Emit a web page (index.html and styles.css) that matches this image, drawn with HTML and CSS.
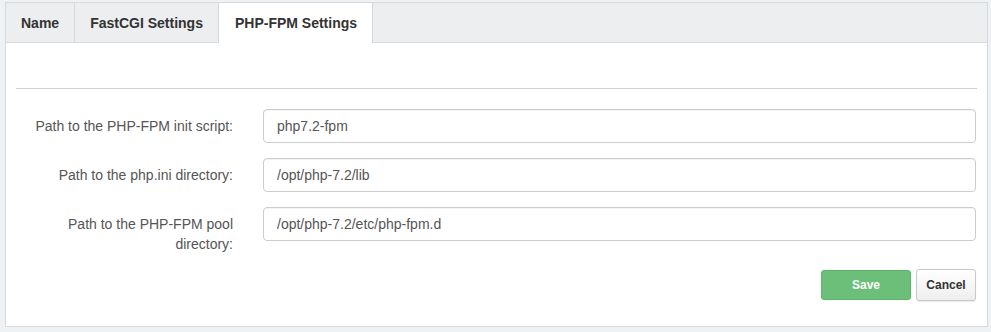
FILE: index.html
```html
<!DOCTYPE html>
<html>
<head>
	<title>PHP-FPM Settings</title>
	<link rel="stylesheet" href="styles.css">
</head>
<body>
	<div class="panel">
		<div class="tabs">
			<div class="tab">Name</div>
			<div class="tab">FastCGI Settings</div>
			<div class="tab active">PHP-FPM Settings</div>
		</div>
		<div class="panel-body">
			<hr class="divider">
			<div class="form-row">
				<label class="label">Path to the PHP-FPM init script:</label>
				<input class="field" type="text" value="php7.2-fpm">
			</div>
			<div class="form-row">
				<label class="label">Path to the php.ini directory:</label>
				<input class="field" type="text" value="/opt/php-7.2/lib">
			</div>
			<div class="form-row">
				<label class="label">Path to the PHP-FPM pool directory:</label>
				<input class="field" type="text" value="/opt/php-7.2/etc/php-fpm.d">
			</div>
			<div class="actions">
				<a href="#" class="btn btn-save">Save</a>
				<a href="#" class="btn btn-cancel">Cancel</a>
			</div>
		</div>
	</div>
</body>
</html>
```

FILE: styles.css
```css
body {
	margin: 0;
	background-color: #eef2f5;
	font-family: "Liberation Sans", Arial, sans-serif;
	font-size: 14px;
	color: #333;
}
.panel {
	margin: 2px 3px 0 5px;
	height: 325px;
	box-sizing: border-box;
	background-color: #fff;
	border: 1px solid #d6dadd;
}
.tabs {
	display: flex;
	height: 40px;
	box-sizing: border-box;
	background-color: #eceef0;
	border-bottom: 1px solid #d6dadd;
}
.tab {
	display: flex;
	align-items: center;
	padding: 0 15px;
	font-weight: bold;
	color: #333;
	border-right: 1px solid #d6dadd;
}
.tab.active {
	background-color: #fff;
	height: 40px;
	box-sizing: border-box;
	padding: 0 15px 0 16px;
	margin-bottom: -1px;
}
.panel-body {
	padding: 0 10px 0 10px;
}
.divider {
	border: 0;
	border-top: 1px solid #cfd2d4;
	margin: 45px 0 20px 0;
}
.form-row {
	display: flex;
	align-items: flex-start;
	margin-bottom: 15px;
}
.label {
	width: 217px;
	flex-shrink: 0;
	text-align: right;
	padding-top: 7px;
	line-height: 20px;
	margin-right: 30px;
	color: #555;
}
.field {
	flex: 1;
	height: 34px;
	box-sizing: border-box;
	margin-right: 1px;
	border: 1px solid #cccccc;
	border-radius: 4px;
	padding: 6px 13px;
	font-family: "Liberation Sans", Arial, sans-serif;
	font-size: 14px;
	color: #555;
	box-shadow: inset 0 1px 1px rgba(0, 0, 0, 0.05);
}
.actions {
	display: flex;
	justify-content: flex-end;
	align-items: center;
	gap: 5px;
	margin-top: 13px;
	margin-right: 1px;
}
.btn {
	display: inline-flex;
	align-items: center;
	justify-content: center;
	box-sizing: border-box;
	border-radius: 3px;
	font-size: 12px;
	font-weight: bold;
	text-decoration: none;
}
.btn-save {
	width: 90px;
	height: 30px;
	background-color: #6bbf78;
	border: 1px solid #5cb36a;
	color: #fff;
}
.btn-cancel {
	width: 60px;
	height: 32px;
	background: linear-gradient(#ffffff, #eeeeee);
	border: 1px solid #c8c8c8;
	color: #333;
	box-shadow: 0 1px 1px rgba(0, 0, 0, 0.08);
}
```
